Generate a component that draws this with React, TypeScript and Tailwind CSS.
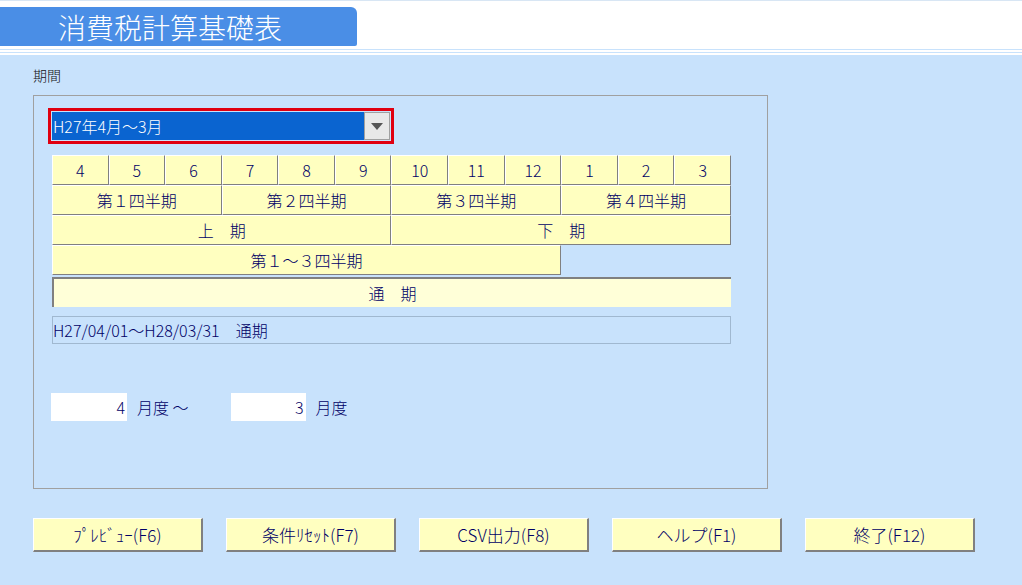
const font = { fontFamily: '"Noto Sans CJK JP", "Liberation Sans", sans-serif' };

const months = ["4", "5", "6", "7", "8", "9", "10", "11", "12", "1", "2", "3"];
const quarters = ["第１四半期", "第２四半期", "第３四半期", "第４四半期"];
const buttons = ["ﾌﾟﾚﾋﾞｭｰ(F6)", "条件ﾘｾｯﾄ(F7)", "CSV出力(F8)", "ヘルプ(F1)", "終了(F12)"];

const cell =
  "h-[30px] flex items-center justify-center bg-[#ffffc0] text-[#000066] text-[16px] border-t border-l border-t-white border-l-white border-r border-b border-r-[#808080] border-b-[#808080]";

export default function App() {
  return (
    <div className="w-[1022px] h-[585px] bg-[#c8e2fc] overflow-hidden text-[#000066] font-light" style={font}>
      <div className="h-[46px] bg-white pt-[6px] border-t border-[#d8e6f4]">
        <div className="w-[357px] h-[39px] bg-[#4a8ee6] rounded-tr-[6px] rounded-br-[2px] flex items-center pl-[58px] text-white text-[28px] leading-none">
          消費税計算基礎表
        </div>
      </div>
      <div className="h-[9px] bg-white flex flex-col justify-center gap-[2px]">
        <div className="h-px bg-[#c8e2fc]" />
        <div className="h-px bg-[#c8e2fc]" />
      </div>
      <div className="pl-[33px] pt-[10px]">
        <div className="text-[14px] h-[30px] text-[#111]">期間</div>
        <div className="w-[735px] h-[394px] border border-[#a0a0a0] pl-[14px] pt-[12px]">
          <div className="w-[346px] h-[36px] border-[3px] border-[#e00010] flex items-center p-px">
            <div className="flex-1 h-full bg-[#0a64d0] text-white text-[16px] flex items-center pl-px">H27年4月～3月</div>
            <div className="w-[26px] h-full bg-[#e8e8e8] border border-[#a0a0a0] flex items-center justify-center">
              <div className="w-0 h-0 border-l-[6px] border-r-[6px] border-t-[7px] border-l-transparent border-r-transparent border-t-[#555]" />
            </div>
          </div>
          <div className="ml-[4px] mt-[11px] w-[679px] grid grid-cols-12">
            {months.map((m) => (
              <div key={m} className={cell}>{m}</div>
            ))}
            {quarters.map((q) => (
              <div key={q} className={cell + " col-span-3"}>{q}</div>
            ))}
            <div className={cell + " col-span-6"}>上　期</div>
            <div className={cell + " col-span-6"}>下　期</div>
            <div className={cell + " col-span-9"}>第１～３四半期</div>
            <div className="col-span-3" />
            <div className="col-span-12 mt-[2px] h-[30px] flex items-center justify-center bg-[#ffffd8] text-[16px] border-t-2 border-l-2 border-t-[#808080] border-l-[#808080]">
              通　期
            </div>
          </div>
          <div className="ml-[4px] mt-[9px] w-[679px] h-[28px] border border-[#a0b8d0] flex items-center text-[16px] text-[#000066]">
            H27/04/01～H28/03/31　通期
          </div>
          <div className="ml-[3px] mt-[49px] flex items-center text-[16px]">
            <div className="w-[76px] h-[28px] bg-white flex items-center justify-end pr-[2px]">4</div>
            <span className="ml-[10px]">月度 ～</span>
            <div className="ml-[42px] w-[75px] h-[28px] bg-white flex items-center justify-end pr-[2px]">3</div>
            <span className="ml-[10px]">月度</span>
          </div>
        </div>
        <div className="mt-[29px] flex gap-[23px]">
          {buttons.map((b) => (
            <div
              key={b}
              className="w-[170px] h-[34px] bg-[#ffffc0] flex items-center justify-center text-[17px] border-t border-l border-white border-r-2 border-b-2 border-r-[#808080] border-b-[#808080]"
            >
              {b}
            </div>
          ))}
        </div>
      </div>
    </div>
  );
}
